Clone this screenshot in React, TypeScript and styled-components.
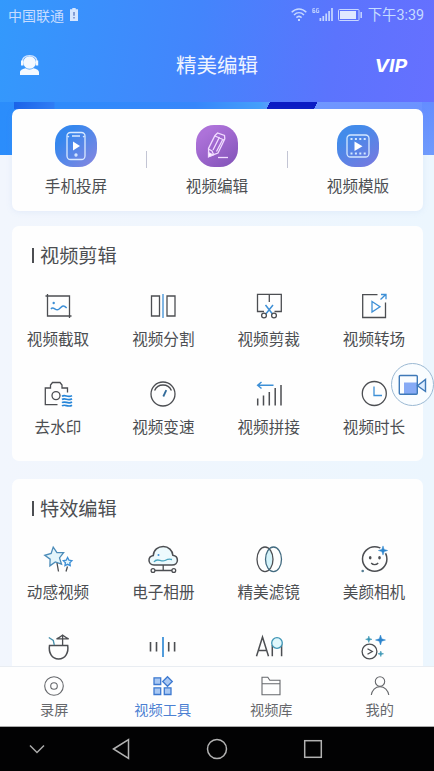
import React from "react";
import styled, { createGlobalStyle } from "styled-components";

const INK = "#4c4e52";
const BLUE = "#3d8fd6";

const GlobalStyle = createGlobalStyle`
  * { box-sizing: border-box; }
  body { margin: 0; font-family: "Noto Sans CJK SC", "Noto Sans", sans-serif; }
  svg { display: block; flex: none; overflow: visible; }
`;

const Phone = styled.div`
  position: relative;
  width: 434px;
  height: 771px;
  display: flex;
  flex-direction: column;
  overflow: hidden;
  background: #eff6fe;
`;

const Header = styled.header`
  height: 102px;
  flex: none;
  background: linear-gradient(98deg, #3399fc 0%, #4385fc 45%, #5b74fd 76%, #6670ff 100%);
`;

const StatusBar = styled.div`
  height: 29px;
  display: flex;
  align-items: center;
  padding: 0 10px 0 8px;
  font-size: 14px;
  line-height: 20px;
  color: #c6dcff;
`;

const StatusGroup = styled.div<{ $gap: number }>`
  display: flex;
  align-items: center;
  gap: ${(p) => p.$gap}px;
`;

const Clock = styled.span`
  font-family: Roboto, "Noto Sans CJK SC", sans-serif;
  font-size: 14.3px;
  line-height: 18px;
`;

const Spacer = styled.div`
  flex: 1;
`;

const TitleBar = styled.div`
  height: 70px;
  display: grid;
  grid-template-columns: 60px 1fr 60px;
  align-items: center;
  padding: 0 27px 0 19px;
`;

const Title = styled.h1`
  margin: 0;
  padding-left: 8px;
  text-align: center;
  font-size: 20.5px;
  font-weight: 400;
  line-height: 28px;
  color: #eef4ff;
`;

const Vip = styled.div`
  justify-self: end;
  padding-top: 3px;
  font: italic 700 17.5px/22px Inter, sans-serif;
  color: #fff;
  transform: scaleX(1.12);
  transform-origin: right center;
`;

const Content = styled.main`
  flex: 1;
  min-height: 0;
  overflow: hidden;
  padding: 7px 11px 0 12px;
  background:
    linear-gradient(#648dff, #6f9bfd) right top / 12px 53px no-repeat,
    linear-gradient(118deg, transparent 9px, #0b1cc4 9px, #0b1cc4 51px, transparent 51px) 260px 0 / 65px 7px no-repeat,
    linear-gradient(90deg, #1b63e8 0, #2f7df5 40px, transparent 41px) 14px 0 / 41px 7px no-repeat,
    linear-gradient(90deg, #2b8dfb 0, #3787fb 45%, #45a0fb 60%, #7199ff 64%, #6c93ff 100%) 0 0 / 100% 53px no-repeat,
    linear-gradient(90deg, #f2f6fd, #ecf6fe);
`;

const Card = styled.section`
  background: #fefefe;
  border-radius: 7px;
`;

const FeatureCard = styled(Card)`
  height: 102px;
  display: flex;
  justify-content: space-between;
  align-items: flex-start;
  padding: 16px 34px 0 33px;
  box-shadow: 0 1px 6px rgba(120, 160, 220, 0.12);
`;

const Feature = styled.div`
  width: 62px;
  display: flex;
  flex-direction: column;
  align-items: center;
`;

const FeatureBadge = styled.div<{ $fill: string }>`
  width: 42px;
  height: 42px;
  border-radius: 18px;
  display: grid;
  place-items: center;
  background: ${(p) => p.$fill};
`;

const Divider = styled.i`
  width: 1px;
  height: 17px;
  margin-top: 26px;
  background: #c3c5d4;
`;

const Label = styled.span`
  font-size: 15.6px;
  line-height: 22px;
  color: ${INK};
  white-space: nowrap;
`;

const FeatureLabel = styled(Label)`
  margin-top: 7px;
`;

const ToolCard = styled(Card)<{ $top: number; $height: number }>`
  margin-top: ${(p) => p.$top}px;
  height: ${(p) => p.$height}px;
  padding: 15px 17px 0 14px;
`;

const Heading = styled.h2`
  margin: 0 0 21px 6px;
  display: flex;
  align-items: center;
  gap: 6px;
  height: 28px;
  font-size: 19.2px;
  font-weight: 400;
  line-height: 28px;
  color: ${INK};

  &::before {
    content: "";
    width: 2px;
    height: 15px;
    background: ${INK};
  }
`;

const ToolRow = styled.div`
  display: flex;
  justify-content: space-between;
  height: 88px;
`;

const Tool = styled.div`
  width: 64px;
  display: flex;
  flex-direction: column;
  align-items: center;
  gap: 5px;
`;

const TabBar = styled.nav`
  height: 61px;
  flex: none;
  display: grid;
  grid-template-columns: repeat(4, 1fr);
  background: #fefefe;
  border-top: 1px solid #e9edf2;
  border-bottom: 1px solid #aaa;
`;

const Tab = styled.div<{ $active?: boolean }>`
  display: flex;
  flex-direction: column;
  align-items: center;
  gap: 2px;
  padding-top: 8px;
  font-size: 14.2px;
  line-height: 20px;
  color: ${(p) => (p.$active ? "#4b80d2" : "#66686c")};
`;

const SystemNav = styled.div`
  height: 44px;
  flex: none;
  display: grid;
  grid-template-columns: 73px 96px 96px 96px;
  align-items: center;
  justify-items: center;
  background: #020203;
`;

const RecordButton = styled.div`
  position: absolute;
  left: 391px;
  top: 363px;
  width: 43px;
  height: 43px;
  border: 1px solid #9bb9d3;
  border-radius: 50%;
  display: grid;
  place-items: center;
  background: rgba(250, 253, 255, 0.95);
`;

function star(cx: number, cy: number, R: number, r: number, turn = -90) {
  return Array.from({ length: 10 }, (_, i) => {
    const a = ((turn + i * 36) * Math.PI) / 180;
    const d = i % 2 ? r : R;
    return `${(cx + d * Math.cos(a)).toFixed(2)},${(cy + d * Math.sin(a)).toFixed(2)}`;
  }).join(" ");
}

function Sparkle({ x, y, r, color = "#2c84cc" }: { x: number; y: number; r: number; color?: string }) {
  const k = r * 0.24;
  return (
    <path
      d={`M${x} ${y - r}L${x + k} ${y - k}L${x + r} ${y}L${x + k} ${y + k}L${x} ${y + r}L${x - k} ${y + k}L${x - r} ${y}L${x - k} ${y - k}Z`}
      fill={color}
      stroke={color}
      strokeWidth=".5"
    />
  );
}

const Glyph = ({ children }: { children: React.ReactNode }) => (
  <svg width="32" height="32" viewBox="0 0 32 32" fill="none" stroke={INK} strokeWidth="1.3">
    {children}
  </svg>
);

const editTools = [
  [
    {
      name: "视频截取",
      icon: (
        <>
          <path d="M3.5 6H27.5V28M5.5 4V26H29.5" />
          <path d="M9 19C11.5 15.5 13.5 21.5 16.5 19.5S20.5 13.5 24.7 18" stroke={BLUE} strokeWidth="1.5" />
          <circle cx="11.7" cy="13" r="1.2" fill={BLUE} stroke="none" />
        </>
      ),
    },
    {
      name: "视频分割",
      icon: (
        <>
          <path d="M4.5 6H12.5V26H4.5ZM20 6H28V26H20Z" />
          <path d="M16 4V28" stroke={BLUE} />
        </>
      ),
    },
    {
      name: "视频剪裁",
      icon: (
        <>
          <path d="M11 21.5H4.5V4.3H28.3V21.5H21.5M16.3 4.3V12" />
          <path d="M12.5 15L19.5 24M20 15L12.8 24" stroke={BLUE} strokeWidth="1.5" />
          <circle cx="11" cy="25.5" r="2.4" />
          <circle cx="21" cy="25.5" r="2.4" />
        </>
      ),
    },
    {
      name: "视频转场",
      icon: (
        <>
          <path d="M19.5 4.7H4.7V27.5H27.5V12.5" />
          <path d="M14 11.5L22 16.7L14 22ZM22.5 9.5L27.5 4.7M23 4.5H28V9.2" stroke={BLUE} />
        </>
      ),
    },
  ],
  [
    {
      name: "去水印",
      icon: (
        <>
          <path d="M15.5 26.7H3.3V10H8.5V7L10.5 4.5H18L20 7V10H25.5V14.5" />
          <circle cx="14" cy="17.6" r="4" />
          <path
            d="M20 18.3C23 16 26 20.2 30 17.6M20 21.5C23 19.2 26 23.4 30 20.8M20 24.7C23 22.4 26 26.6 30 24M20 27.9C23 25.6 26 29.8 30 27.2"
            stroke="#2484d8"
            strokeWidth="1.7"
          />
        </>
      ),
    },
    {
      name: "视频变速",
      icon: (
        <>
          <circle cx="16" cy="16" r="12" />
          <path d="M7.6 12.5A9.2 9.2 0 0 1 24.4 12.5" strokeWidth="1.4" />
          <path d="M19.3 12.2L16.3 18.5" stroke="#326b9a" strokeWidth="1.8" />
        </>
      ),
    },
    {
      name: "视频拼接",
      icon: (
        <>
          <path d="M4.7 20.5V27.5M10.5 17.5V27.5M16.3 14V27.5M22.2 10V27.5M28 7V27.5" strokeWidth="1.5" />
          <path d="M20.5 7.3H5M8.5 4L4.7 7.3L8.5 10.5" stroke={BLUE} strokeWidth="1.5" />
        </>
      ),
    },
    {
      name: "视频时长",
      icon: (
        <>
          <circle cx="16.3" cy="15.5" r="12" />
          <path d="M16 8.5V17.5H24" stroke={BLUE} />
        </>
      ),
    },
  ],
];

const effectTools = [
  [
    {
      name: "动感视频",
      icon: (
        <>
          <polygon points={star(12.6, 14, 10, 5, -98)} fill="#e3f5fb" stroke="#4b8bb8" />
          <polygon points={star(25.6, 19, 4.5, 2.3)} stroke={BLUE} fill="#e3f5fb" />
          <path d="M15 20L16.5 28.5M25.5 23.5L24 28.5" />
        </>
      ),
    },
    {
      name: "电子相册",
      icon: (
        <>
          <path
            d="M7 22C3.7 22 2 19.7 2 17.2S4 12.9 6.3 12.5C6.5 7 11 3.5 16.3 3.5S25.5 7.5 25.8 12.2C28.4 12.6 30.4 14.5 30.4 17.2S28.3 22 25 22Z"
            fill="#edfafd"
            strokeWidth="1.5"
          />
          <path d="M7 19C10 14 14 19.5 18 17.5S22 16 25 16.5" stroke="#4aa5c0" />
          <circle cx="11.5" cy="12" r="1" fill={BLUE} stroke="none" />
          <path d="M16.2 22V27.5M8 27.5H25" />
          <circle cx="6" cy="27.5" r="1.9" />
          <circle cx="26.8" cy="27.5" r="1.9" />
        </>
      ),
    },
    {
      name: "精美滤镜",
      icon: (
        <>
          <path d="M16.2 6C20.8 12 20.8 21 16.2 27C11.7 21 11.7 12 16.2 6Z" fill="#d5f3fa" stroke="none" />
          <ellipse cx="12" cy="16.3" rx="8" ry="12.3" />
          <ellipse cx="20.5" cy="16.3" rx="8" ry="12.3" stroke="#426b80" />
        </>
      ),
    },
    {
      name: "美颜相机",
      icon: (
        <>
          <circle cx="16.7" cy="16" r="12.2" strokeWidth="1.5" />
          <ellipse cx="12.2" cy="14.8" rx="1.3" ry="1.7" fill={INK} stroke="none" />
          <ellipse cx="21.5" cy="14.8" rx="1.3" ry="1.7" fill={INK} stroke="none" />
          <path d="M13.2 20C15 22.2 18.3 22.2 20.2 20" />
          <circle cx="25" cy="7.5" r="3.6" fill="#fefefe" stroke="none" />
          <Sparkle x={25} y={7.5} r={4.6} />
          <circle cx="4.7" cy="28" r="1.3" fill="#567e94" stroke="none" />
        </>
      ),
    },
  ],
  [
    {
      name: "",
      icon: (
        <>
          <path d="M7.5 14.5H25.7C26.8 21.5 23.5 28 16.6 28S6.4 21.5 7.5 14.5Z" strokeWidth="1.5" />
          <path d="M20.6 5V14.5M14.5 7.8C16.8 7 18.5 5.5 20.6 4C22.7 5.5 24.4 7 26.7 7.8Z" />
          <path d="M6.8 6.5L11.3 9.5L12.3 14" stroke="#458ea9" />
        </>
      ),
    },
    {
      name: "",
      icon: (
        <>
          <path d="M3.5 11V20.5M9.5 11V20.5M21.7 11V20.5M27.6 11V20.5" strokeWidth="1.6" />
          <path d="M16 6V26" stroke="#2684d4" strokeWidth="1.6" />
        </>
      ),
    },
    {
      name: "",
      icon: (
        <>
          <path d="M3.5 25.3L9.5 6L15.5 25.3M5.5 19.5H13.5M19.3 14V25.3M28.6 13V25.3" strokeWidth="1.5" />
          <circle cx="24" cy="12" r="5.3" fill="#e0f7fc" stroke="#3f95b5" />
        </>
      ),
    },
    {
      name: "",
      icon: (
        <>
          <circle cx="11.5" cy="20.5" r="7.4" />
          <path d="M9.5 17.7L14.3 20.5L9.5 23.3" />
          <Sparkle x={22.5} y={9} r={5} />
          <Sparkle x={10.8} y={8.3} r={3.2} color="#3895b3" />
          <Sparkle x={22.8} y={22.8} r={2.8} color="#3895b3" />
        </>
      ),
    },
  ],
];

type ToolItem = { name: string; icon: React.ReactNode };

const ToolRows = ({ rows }: { rows: ToolItem[][] }) => (
  <>
    {rows.map((row, r) => (
      <ToolRow key={r}>
        {row.map((tool, i) => (
          <Tool key={i}>
            <Glyph>{tool.icon}</Glyph>
            {tool.name && <Label>{tool.name}</Label>}
          </Tool>
        ))}
      </ToolRow>
    ))}
  </>
);

const TabGlyph = ({ children }: { children: React.ReactNode }) => (
  <svg width="22" height="22" viewBox="0 0 22 22" fill="none" stroke="currentColor" strokeWidth="1.1">
    {children}
  </svg>
);

export default function App() {
  return (
    <Phone>
      <GlobalStyle />
      <Header>
        <StatusBar>
          <StatusGroup $gap={6}>
            中国联通
            <svg width="8" height="13" viewBox="0 0 8 13">
              <path d="M2.3 0H5.7V1.3H8V13H0V1.3H2.3Z" fill="#d5e6ff" />
              <path d="M4 4V7.7M4 9V10.4" stroke="#6a86c8" strokeWidth="1.5" />
            </svg>
          </StatusGroup>
          <Spacer />
          <StatusGroup $gap={5}>
            <svg width="16" height="13" viewBox="0 0 16 13" fill="none" stroke="#c6d8ff" strokeWidth="1.5">
              <path d="M.7 4.3C5-.2 11-.2 15.3 4.3M3 7C6 4 10 4 13 7M5.4 9.6C7 8 9 8 10.6 9.6" />
              <path d="M8 11V13" strokeWidth="2" />
            </svg>
            <svg width="21" height="13" viewBox="0 0 21 13" fill="none" stroke="#c6d8ff">
              <path d="M3 .7H.8V4.5H3V2.7H1M6.8.7H4.6V4.5H6.8V2.7H5.8" strokeWidth=".9" />
              <path d="M8.4 13V10M11.3 13V8M14.2 13V5.5M17.1 13V3M20 13V0" strokeWidth="1.7" />
            </svg>
            <svg width="25" height="12" viewBox="0 0 25 12">
              <rect x=".5" y=".5" width="20.5" height="11" rx="1" fill="none" stroke="#c8d7ff" />
              <path d="M2 2H18V10H2Z" fill="#dfe8ff" />
              <path d="M23.2 3V9" stroke="#c8d7ff" strokeWidth="1.5" />
            </svg>
            <Clock>下午3:39</Clock>
          </StatusGroup>
        </StatusBar>
        <TitleBar>
          <svg width="21" height="21" viewBox="0 0 21 21" fill="#f4f9ff">
            <circle cx="10.6" cy="8.5" r="6.3" />
            <path d="M3.6 9.5C2.5 4 6 1.7 10.6 1.7S18.7 4 17.6 9.5" fill="none" stroke="#cfe3ff" strokeWidth="1.3" />
            <path d="M2 6.5H4.4V11.5H2ZM16.8 6.5H19.2V11.5H16.8Z" />
            <path d="M1 21V18.5C1 16 4 14.8 6.8 14.3C9 16 12 16 14.4 14.3C17.2 14.8 20 16 20 18.5V21Z" />
          </svg>
          <Title>精美编辑</Title>
          <Vip>VIP</Vip>
        </TitleBar>
      </Header>

      <Content>
        <FeatureCard>
          <Feature>
            <FeatureBadge $fill="linear-gradient(135deg, #3687ee 25%, #8a87df)">
              <svg width="20" height="30" viewBox="0 0 20 30" fill="none" stroke="#d9eaff" strokeWidth="1.3">
                <rect x="1" y="1.5" width="18" height="27" rx="3.5" />
                <path d="M6 5H14M1.5 5L3 6M18.5 5L17 6" />
                <path d="M7 10.5L14 15L7 19.5Z" fill="#fff" stroke="none" />
                <circle cx="10" cy="24" r="1" />
              </svg>
            </FeatureBadge>
            <FeatureLabel>手机投屏</FeatureLabel>
          </Feature>
          <Divider />
          <Feature>
            <FeatureBadge $fill="linear-gradient(145deg, #ad72d9 20%, #8152b7)">
              <svg width="28" height="28" viewBox="0 0 28 28" fill="none" stroke="#f1dcff" strokeWidth="1.3">
                <path d="M12 3.5L14.5 1L21.5 3.5L21.8 7L15 21L5.8 24.5L5.5 16.5ZM5.5 17L9 19L10.5 22.5L15 21M10 18L16.5 5M13.5 19.5L20 7M12 4L21 8" />
                <path d="M5.5 20.5V24.8L10 23Z" fill="#fff" />
                <path d="M15 25.5H25" />
              </svg>
            </FeatureBadge>
            <FeatureLabel>视频编辑</FeatureLabel>
          </Feature>
          <Divider />
          <Feature>
            <FeatureBadge $fill="linear-gradient(145deg, #438bea 25%, #7b78df)">
              <svg width="24" height="24" viewBox="0 0 24 24" fill="none" stroke="#d4e8ff" strokeWidth="1.3">
                <rect x="1" y="1" width="22" height="22" rx="3.5" />
                <path d="M4.5 5H20M4.5 19.5H20" strokeWidth="2" strokeDasharray="2 2.4" />
                <path d="M8.5 7.5L16.5 12.2L8.5 17Z" fill="#fff" stroke="none" />
              </svg>
            </FeatureBadge>
            <FeatureLabel>视频模版</FeatureLabel>
          </Feature>
        </FeatureCard>

        <ToolCard $top={15} $height={235}>
          <Heading>视频剪辑</Heading>
          <ToolRows rows={editTools} />
        </ToolCard>

        <ToolCard $top={18} $height={235}>
          <Heading>特效编辑</Heading>
          <ToolRows rows={effectTools} />
        </ToolCard>
      </Content>

      <TabBar>
        <Tab>
          <TabGlyph>
            <circle cx="11" cy="11" r="9.3" />
            <circle cx="11" cy="11" r="3.3" />
          </TabGlyph>
          录屏
        </Tab>
        <Tab $active>
          <TabGlyph>
            <g fill="#a9c8f3" stroke="#3d79d0" strokeWidth="1.3">
              <path d="M2 2.8H8.7V9.5H2ZM2 12.8H8.7V19.5H2ZM12.3 12.8H19V19.5H12.3ZM15.5 1.7L20.3 6.5L15.5 11.3L10.7 6.5Z" />
            </g>
          </TabGlyph>
          视频工具
        </Tab>
        <Tab>
          <TabGlyph>
            <path d="M2 19.8V2.2H7.8L9.8 5.2H20V19.8ZM2 8.7H20" />
          </TabGlyph>
          视频库
        </Tab>
        <Tab>
          <TabGlyph>
            <circle cx="11" cy="6.5" r="4.7" />
            <path d="M2.3 20C3 15.5 6.2 11.6 11 11.6S19 15.5 19.8 20" />
          </TabGlyph>
          我的
        </Tab>
      </TabBar>

      <SystemNav>
        <svg width="16" height="10" viewBox="0 0 16 10" fill="none" stroke="#aaa" strokeWidth="1.5">
          <path d="M1 1.5L8 8.5L15 1.5" />
        </svg>
        <svg width="18" height="22" viewBox="0 0 18 22" fill="none" stroke="#b2b2b2" strokeWidth="1.5">
          <path d="M1.5 11L16.5 1.5V20.5Z" />
        </svg>
        <svg width="22" height="22" viewBox="0 0 22 22" fill="none" stroke="#b2b2b2" strokeWidth="1.5">
          <circle cx="11" cy="11" r="9.5" />
        </svg>
        <svg width="20" height="20" viewBox="0 0 20 20" fill="none" stroke="#b2b2b2" strokeWidth="1.5">
          <rect x="1.7" y="1.7" width="16.6" height="16.6" />
        </svg>
      </SystemNav>

      <RecordButton>
        <svg width="29" height="22" viewBox="0 0 29 22" fill="none" stroke="#3e79b8" strokeWidth="1.4">
          <path d="M6 8.5H19V20H6Z" fill="#86aaf5" stroke="none" />
          <rect x="1.3" y="1.5" width="18" height="18.7" rx="1" />
          <path d="M27.5 5.5V17.5L19.5 11.7Z" fill="#dcecff" />
        </svg>
      </RecordButton>
    </Phone>
  );
}
